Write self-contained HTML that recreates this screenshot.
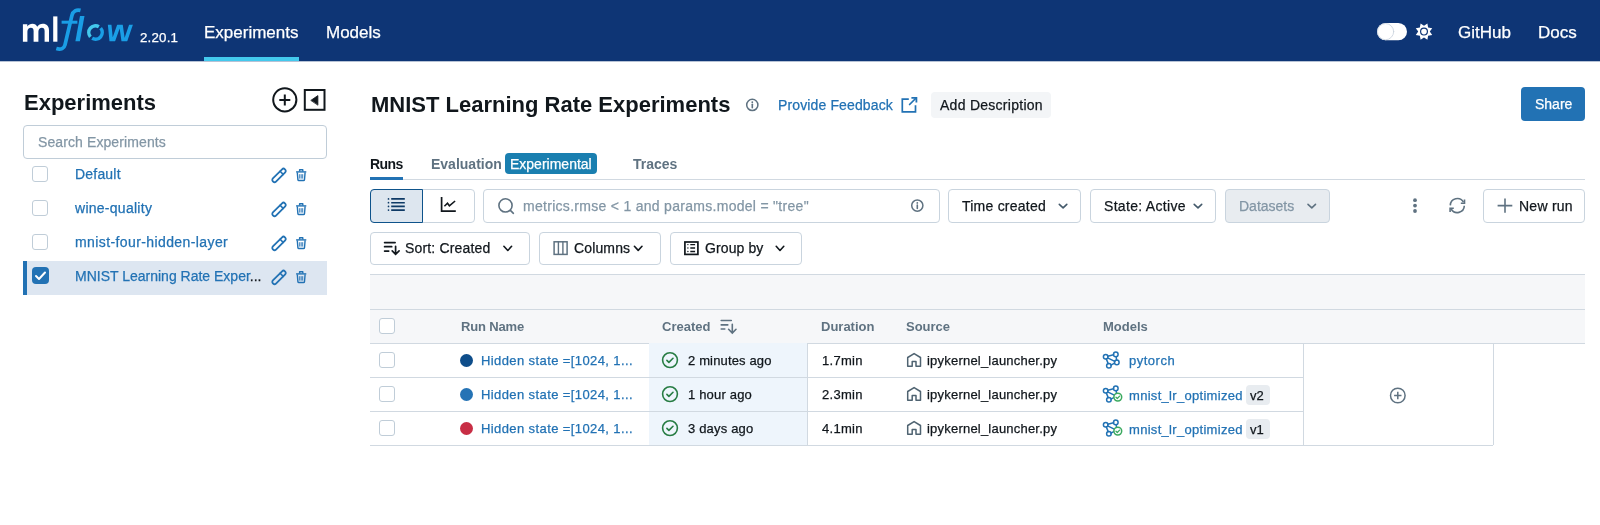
<!DOCTYPE html>
<html><head><meta charset="utf-8">
<style>
*{box-sizing:border-box;margin:0;padding:0}
html,body{width:1600px;height:525px;overflow:hidden;background:#fff;font-family:"Liberation Sans",sans-serif;color:#11171c}
.a{position:absolute}
.t{position:absolute;white-space:nowrap;line-height:1;will-change:transform;-webkit-text-stroke:0.25px currentColor}
#hdr{position:absolute;left:0;top:0;width:1600px;height:61px;background:#0e3575}
.nav{color:#fff;font-size:17px}
.blue{color:#2272b4}
.sec{color:#5f7281}
.btn{position:absolute;border:1px solid #c9d4de;border-radius:4px;background:#fff}
.cb{position:absolute;width:16px;height:16px;border:1px solid #c0cdd8;border-radius:3px;background:#fff}
.hl{position:absolute;height:1px;background:#d1d9e1}
.vl{position:absolute;width:1px;background:#d1d9e1}
svg{position:absolute;overflow:visible}
.t[style*="font-weight:700"]{-webkit-text-stroke:0}
</style></head><body>
<div class="a" style="left:0;top:61px;width:1600px;height:1px;background:rgba(14,53,117,0.3)"></div>
<div id="hdr">
  <div class="t nav" style="left:204px;top:24px">Experiments</div>
  <div class="t nav" style="left:325.5px;top:24px">Models</div>
  <div class="a" style="left:204px;top:57px;width:95px;height:4px;background:#43c9ed"></div>
  <div class="t nav" style="left:1458px;top:24px">GitHub</div>
  <div class="t nav" style="left:1537.5px;top:24px">Docs</div>
  <div class="t" style="left:139.5px;top:30.8px;font-size:13.3px;color:#fff;letter-spacing:0.2px">2.20.1</div>
</div>

<!-- sidebar -->
<div class="t" style="left:24px;top:92.2px;font-size:22px;font-weight:700">Experiments</div>
<div class="a" style="left:23px;top:125px;width:304px;height:34px;border:1px solid #c0cdd8;border-radius:4px"></div>
<div class="t" style="left:37.5px;top:135.3px;font-size:14px;color:#8396a5;letter-spacing:0.1px">Search Experiments</div>

<div class="cb" style="left:32px;top:166px"></div>
<div class="t blue" style="left:74.5px;top:166.8px;font-size:14px;letter-spacing:0.2px">Default</div>
<div class="cb" style="left:32px;top:200px"></div>
<div class="t blue" style="left:74.5px;top:200.8px;font-size:14px;letter-spacing:0.27px">wine-quality</div>
<div class="cb" style="left:32px;top:234px"></div>
<div class="t blue" style="left:74.5px;top:234.8px;font-size:14px;letter-spacing:0.4px">mnist-four-hidden-layer</div>
<div class="a" style="left:27px;top:261px;width:300px;height:34px;background:#dde6f1"></div>
<div class="a" style="left:23.3px;top:261px;width:4.2px;height:34px;background:#2272b4"></div>
<div class="a" style="left:32px;top:267px;width:16.7px;height:16.7px;border-radius:4px;background:#2272b4"></div>
<div class="t blue" style="left:74.5px;top:268.8px;font-size:14px">MNIST Learning Rate Exper<span style="color:#11171c">...</span></div>

<!-- main title -->
<div class="t" style="left:371px;top:94.1px;font-size:22px;font-weight:700">MNIST Learning Rate Experiments</div>
<div class="t blue" style="left:778px;top:98.2px;font-size:14px;letter-spacing:0.13px">Provide Feedback</div>
<div class="a" style="left:931px;top:92px;width:120px;height:25.5px;border-radius:4px;background:#f3f5f7"></div>
<div class="t" style="left:940px;top:98.2px;font-size:14px;letter-spacing:0.27px">Add Description</div>
<div class="a" style="left:1520.5px;top:87px;width:64.5px;height:34px;border-radius:4px;background:#2272b4"></div>
<div class="t" style="left:1534.5px;top:97.2px;font-size:14px;color:#fff">Share</div>

<!-- tabs -->
<div class="t" style="left:370px;top:157px;font-size:14px;font-weight:700;letter-spacing:-0.6px">Runs</div>
<div class="t sec" style="left:431px;top:157px;font-size:14px;font-weight:700">Evaluation</div>
<div class="a" style="left:504.5px;top:153px;width:92px;height:20.5px;border-radius:4px;background:#1a7fb0"></div>
<div class="t" style="left:509.5px;top:157px;font-size:14px;color:#fff">Experimental</div>
<div class="t sec" style="left:633px;top:157px;font-size:14px;font-weight:700">Traces</div>
<div class="hl" style="left:370px;top:179px;width:1215px"></div>
<div class="a" style="left:370px;top:177px;width:33px;height:3px;background:#2272b4"></div>

<!-- toolbar row 1 -->
<div class="btn" style="left:370px;top:189px;width:105px;height:34px"></div>
<div class="a" style="left:370px;top:189px;width:53px;height:34px;border:1px solid #0e538b;border-radius:4px 0 0 4px;background:#dde6ef"></div>
<div class="btn" style="left:483px;top:189px;width:456.5px;height:34px"></div>
<div class="t" style="left:522.5px;top:199.2px;font-size:14px;color:#8396a5;letter-spacing:0.29px">metrics.rmse &lt; 1 and params.model = "tree"</div>
<div class="btn" style="left:948px;top:189px;width:133px;height:34px"></div>
<div class="t" style="left:962px;top:199.2px;font-size:14px;letter-spacing:0.23px">Time created</div>
<div class="btn" style="left:1090px;top:189px;width:126px;height:34px"></div>
<div class="t" style="left:1103.5px;top:199.2px;font-size:14px;letter-spacing:0.31px">State: Active</div>
<div class="btn" style="left:1224.5px;top:189px;width:105px;height:34px;background:#e8ecf0"></div>
<div class="t" style="left:1238.5px;top:199.2px;font-size:14px;color:#8396a5">Datasets</div>
<div class="btn" style="left:1483px;top:189px;width:101.5px;height:34px"></div>
<div class="t" style="left:1518.5px;top:199.2px;font-size:14px;letter-spacing:0.25px">New run</div>

<!-- toolbar row 2 -->
<div class="btn" style="left:370px;top:231.5px;width:159.5px;height:33px"></div>
<div class="t" style="left:405px;top:241.4px;font-size:14px;letter-spacing:0.17px">Sort: Created</div>
<div class="btn" style="left:538.5px;top:231.5px;width:122px;height:33px"></div>
<div class="t" style="left:573.5px;top:241.4px;font-size:14px;letter-spacing:0.14px">Columns</div>
<div class="btn" style="left:669.5px;top:231.5px;width:132px;height:33px"></div>
<div class="t" style="left:704.5px;top:241.4px;font-size:14px;letter-spacing:0.1px">Group by</div>

<!-- table -->
<div class="a" style="left:370px;top:274px;width:1215px;height:69px;background:#f6f7f9"></div>
<div class="hl" style="left:370px;top:273.5px;width:1215px"></div>
<div class="hl" style="left:370px;top:309px;width:1215px"></div>
<div class="hl" style="left:370px;top:342.5px;width:1215px"></div>
<div class="cb" style="left:378.5px;top:318px"></div>
<div class="t sec" style="left:460.5px;top:319.8px;font-size:13px;font-weight:700;letter-spacing:-0.15px">Run Name</div>
<div class="t sec" style="left:662px;top:319.8px;font-size:13px;font-weight:700">Created</div>
<div class="t sec" style="left:821px;top:319.8px;font-size:13px;font-weight:700">Duration</div>
<div class="t sec" style="left:906px;top:319.8px;font-size:13px;font-weight:700">Source</div>
<div class="t sec" style="left:1103px;top:319.8px;font-size:13px;font-weight:700">Models</div>

<div class="a" style="left:649px;top:343px;width:158px;height:102px;background:#eef5fc"></div>
<div class="vl" style="left:807px;top:343px;height:102px"></div>
<div class="hl" style="left:370px;top:377px;width:933px"></div>
<div class="hl" style="left:370px;top:411px;width:933px"></div>
<div class="hl" style="left:370px;top:444.5px;width:1123px"></div>
<div class="vl" style="left:1302.5px;top:343px;height:102px"></div>
<div class="vl" style="left:1492.5px;top:343px;height:102px"></div>

<div class="cb" style="left:378.5px;top:352px"></div>
<div class="cb" style="left:378.5px;top:386px"></div>
<div class="cb" style="left:378.5px;top:420px"></div>
<div class="a" style="left:459.8px;top:353.5px;width:13px;height:13px;border-radius:50%;background:#0e4d8a"></div>
<div class="a" style="left:459.8px;top:387.5px;width:13px;height:13px;border-radius:50%;background:#2573b5"></div>
<div class="a" style="left:459.8px;top:421.5px;width:13px;height:13px;border-radius:50%;background:#c82e45"></div>
<div class="t blue" style="left:481px;top:354px;font-size:13px;letter-spacing:0.4px">Hidden state =[1024, 1...</div>
<div class="t blue" style="left:481px;top:388px;font-size:13px;letter-spacing:0.4px">Hidden state =[1024, 1...</div>
<div class="t blue" style="left:481px;top:422px;font-size:13px;letter-spacing:0.4px">Hidden state =[1024, 1...</div>
<div class="t" style="left:688px;top:354px;font-size:13px;letter-spacing:0.15px">2 minutes ago</div>
<div class="t" style="left:688px;top:388px;font-size:13px;letter-spacing:0.18px">1 hour ago</div>
<div class="t" style="left:688px;top:422px;font-size:13px;letter-spacing:0.18px">3 days ago</div>
<div class="t" style="left:821.5px;top:354px;font-size:13px;letter-spacing:0.3px">1.7min</div>
<div class="t" style="left:821.5px;top:388px;font-size:13px;letter-spacing:0.3px">2.3min</div>
<div class="t" style="left:821.5px;top:422px;font-size:13px;letter-spacing:0.3px">4.1min</div>
<div class="t" style="left:927px;top:354px;font-size:13px;letter-spacing:0.21px">ipykernel_launcher.py</div>
<div class="t" style="left:927px;top:388px;font-size:13px;letter-spacing:0.21px">ipykernel_launcher.py</div>
<div class="t" style="left:927px;top:422px;font-size:13px;letter-spacing:0.21px">ipykernel_launcher.py</div>
<div class="t blue" style="left:1128.5px;top:354px;font-size:13px;letter-spacing:0.5px">pytorch</div>
<div class="t blue" style="left:1128.5px;top:389px;font-size:13px;letter-spacing:0.3px">mnist_lr_optimized</div>
<div class="t blue" style="left:1128.5px;top:423px;font-size:13px;letter-spacing:0.3px">mnist_lr_optimized</div>
<div class="a" style="left:1246px;top:384.5px;width:24px;height:20px;border-radius:4px;background:#e8ecf0"></div>
<div class="t" style="left:1250px;top:389px;font-size:13px">v2</div>
<div class="a" style="left:1246px;top:418.5px;width:24px;height:20px;border-radius:4px;background:#e8ecf0"></div>
<div class="t" style="left:1250px;top:423px;font-size:13px">v1</div>


<svg width="1600" height="525" style="left:0;top:0" viewBox="0 0 1600 525" fill="none" stroke-linecap="round" stroke-linejoin="round">
<defs><clipPath id="wclip"><rect x="100" y="24.7" width="40" height="16.5"/></clipPath></defs>
<!-- logo -->
<g fill="#fff" stroke="none">
 <path d="M22.9 41.7V24.2H27.3V26.6C28.5 24.8 30.3 23.8 32.5 23.8C34.8 23.8 36.4 24.9 37.2 26.8C38.5 24.9 40.4 23.8 42.8 23.8C46.7 23.8 49 26.2 49 30.3V41.7H44.6V31C44.6 28.9 43.7 27.8 41.9 27.8C40 27.8 38.4 29.3 38.4 31.8V41.7H33.6V31C33.6 28.9 32.7 27.8 30.9 27.8C29 27.8 27.4 29.3 27.4 31.8V41.7Z"/>
 <rect x="53.2" y="16.4" width="4.2" height="25.3"/>
</g>
<g stroke="#1a9ee6" fill="none" stroke-linecap="butt">
 <path d="M80.5 10.4C76.5 9.4 73 10.8 71.9 15.5L65 44.8C64.2 48.3 61 50.1 56.3 48.6" stroke-width="3.7"/>
 <path d="M61.6 22.2H77.4" stroke-width="3"/>
</g>
<path d="M80 16H84.5L79.9 41.2H75.4Z" fill="#1a9ee6"/>
<path d="M90.37 36.81A6.7 6.7 0 0 1 98.85 26.70" stroke="#43c9ed" stroke-width="3.5" stroke-linecap="butt"/>
<path d="M100.63 28.19A6.7 6.7 0 0 1 92.15 38.30" stroke="#1a9ee6" stroke-width="3.5" stroke-linecap="butt"/>
<g clip-path="url(#wclip)"><path d="M109.2 20L111.7 45.5L120.4 21L123.9 45.5L132.6 20" stroke="#1a9ee6" stroke-width="3.6" stroke-linecap="butt" stroke-linejoin="miter" stroke-miterlimit="10"/></g>
<!-- toggle & sun -->
<rect x="1377" y="23" width="30" height="17.3" rx="8.65" fill="#fff"/>
<circle cx="1385.6" cy="31.65" r="8.1" fill="#fff" stroke="#c6d1dc" stroke-width="0.8"/>
<g transform="translate(1424 31.6)">
 <path d="M0.00 -5.80L3.41 -8.22L4.10 -4.10L8.22 -3.41L5.80 0.00L8.22 3.41L4.10 4.10L3.41 8.22L0.00 5.80L-3.41 8.22L-4.10 4.10L-8.22 3.41L-5.80 0.00L-8.22 -3.41L-4.10 -4.10L-3.41 -8.22Z" fill="#fff"/>
 <circle r="3.4" fill="none" stroke="#0e3575" stroke-width="1.2"/>
</g>
<!-- sidebar icons -->
<circle cx="284.8" cy="99.8" r="11.6" stroke="#11171c" stroke-width="2"/>
<path d="M279.3 100H290.3M284.8 94.5V105.5" stroke="#11171c" stroke-width="2" stroke-linecap="butt"/>
<rect x="304.8" y="90" width="19.7" height="19.8" stroke="#11171c" stroke-width="2" stroke-linejoin="miter"/>
<path d="M311.1 100.2L317.9 95.6V104.8Z" fill="#11171c" stroke="#11171c" stroke-width="0.8"/>
<g id="pen">
 <g transform="translate(279.1 175.35) rotate(-45)">
  <rect x="-8.6" y="-2.2" width="17" height="4.4" rx="2" stroke="#2272b4" stroke-width="1.8"/>
  <path d="M3.6-2.2V2.2" stroke="#2272b4" stroke-width="1.6"/>
 </g>
</g>
<g id="trash" stroke="#2272b4" stroke-width="1.4" stroke-linecap="butt" stroke-linejoin="round">
 <path d="M296.1 171.9H306.3"/>
 <path d="M299.6 171.6V169.8H302.8V171.6"/>
 <path d="M297.3 172.4L297.9 179.6Q298 180.5 298.9 180.5H303.5Q304.4 180.5 304.5 179.6L305.1 172.4"/>
 <path d="M299.7 174.2V178.6M301.2 174.2V178.6M302.7 174.2V178.6" stroke-width="0.9"/>
</g>
<use href="#pen" y="34"/><use href="#trash" y="34"/>
<use href="#pen" y="68"/><use href="#trash" y="68"/>
<use href="#pen" y="102"/><use href="#trash" y="102"/>
<path d="M36 276L39 279L45 272.5" stroke="#fff" stroke-width="2"/>
<!-- title icons -->
<circle cx="752.3" cy="104.9" r="5.6" stroke="#5f7281" stroke-width="1.5"/>
<path d="M752.3 104.3V107.7" stroke="#5f7281" stroke-width="1.6"/>
<circle cx="752.3" cy="102.2" r="0.9" fill="#5f7281" stroke="none"/>
<path d="M908.8 99.1H902.3V111.8H915.5V105.3" stroke="#2272b4" stroke-width="1.7" stroke-linecap="butt" stroke-linejoin="miter"/>
<path d="M909.6 104.5L915.6 98.5" stroke="#2272b4" stroke-width="1.7"/>
<path d="M911.4 97.8H916.4V102.4" stroke="#2272b4" stroke-width="1.8" stroke-linecap="butt" stroke-linejoin="miter"/>
<!-- toolbar icons -->
<g stroke="#0e3a66" stroke-width="1.6" stroke-linecap="butt">
 <path d="M391.2 198.9H404.8M391.2 202.7H404.8M391.2 206.4H404.8M391.2 210.1H404.8"/>
</g>
<g fill="#0e3a66"><circle cx="388.5" cy="198.9" r="0.85"/><circle cx="388.5" cy="202.7" r="0.85"/><circle cx="388.5" cy="206.4" r="0.85"/><circle cx="388.5" cy="210.1" r="0.85"/></g>
<path d="M441.6 197.1V211.1H455.8" stroke="#11171c" stroke-width="1.7" stroke-linecap="butt" stroke-linejoin="miter"/>
<path d="M444.4 206.3L447.5 203.3L449.4 205.8L455.1 201" stroke="#11171c" stroke-width="1.6" stroke-linecap="butt" stroke-linejoin="miter"/>
<circle cx="505.5" cy="205.4" r="6.6" stroke="#5f7281" stroke-width="1.6"/>
<path d="M510.4 210.4L513.4 213.3" stroke="#5f7281" stroke-width="1.6"/>
<circle cx="917.3" cy="205.6" r="5.6" stroke="#5f7281" stroke-width="1.5"/>
<path d="M917.3 205V208.4" stroke="#5f7281" stroke-width="1.6"/>
<circle cx="917.3" cy="202.9" r="0.9" fill="#5f7281" stroke="none"/>
<g stroke="#445a6b" stroke-width="1.6">
 <path d="M1059.3 204.3L1063.1 207.8L1066.8 204.3"/>
 <path d="M1194.2 204.3L1198 207.8L1201.7 204.3"/>
 <path d="M1504.7 240"/>
</g>
<path d="M1308 204.3L1311.8 207.8L1315.5 204.3" stroke="#5f7281" stroke-width="1.6"/>
<g fill="#5f7281"><circle cx="1415" cy="200.2" r="1.9"/><circle cx="1415" cy="205.6" r="1.9"/><circle cx="1415" cy="211" r="1.9"/></g>
<g stroke="#5f7281" stroke-width="1.6" stroke-linecap="butt" stroke-linejoin="miter">
 <path d="M1450.3 205.4A7 7 0 0 1 1463.4 202.2"/>
 <path d="M1464.3 205.8A7 7 0 0 1 1451.2 209"/>
 <path d="M1460.8 203.2H1464.5V199.5"/>
 <path d="M1453.8 208.3H1450.1V212"/>
 <path d="M1497.6 205.6H1512.3M1505 198.4V212.8"/>
</g>
<!-- row 2 icons -->
<g stroke="#11171c" stroke-width="1.7" stroke-linecap="round">
 <path d="M384.6 242.6H395.1M384.6 246.7H391.7M384.6 251.1H388.7"/>
 <path d="M395.6 246.3V254.2M392.2 250.9L395.6 254.3L399.1 250.9" stroke-linejoin="miter"/>
</g>
<path d="M503.9 246.3L507.8 250.5L511.6 246.3" stroke="#11171c" stroke-width="1.6"/>
<rect x="554.1" y="241.8" width="13" height="12.6" stroke="#5f7281" stroke-width="1.5" stroke-linejoin="miter"/>
<path d="M558.4 241.8V254.4M562.9 241.8V254.4" stroke="#5f7281" stroke-width="1.4"/>
<path d="M634.4 246.3L638.2 250.4L642 246.3" stroke="#11171c" stroke-width="1.6"/>
<rect x="684.9" y="242" width="13" height="12.4" stroke="#11171c" stroke-width="1.7" stroke-linejoin="miter"/>
<path d="M690.3 244.6H695.1M690.3 248H695.1M690.3 251.5H695.1" stroke="#11171c" stroke-width="1.4" stroke-linecap="butt"/>
<g fill="#11171c"><circle cx="687.9" cy="244.6" r="0.7"/><circle cx="687.9" cy="248" r="0.7"/><circle cx="687.9" cy="251.5" r="0.7"/></g>
<path d="M776.2 246.3L780 250.5L783.8 246.3" stroke="#11171c" stroke-width="1.6"/>
<!-- table header icon -->
<g stroke="#5f7281" stroke-width="1.6" stroke-linecap="round">
 <path d="M721.2 320.5H731.3M721.2 324.9H727.8M721.2 329H724.8"/>
 <path d="M732.3 324.3V332.7M728.6 329.3L732.3 333L736 329.3" stroke-linejoin="miter"/>
</g>
<!-- row icons -->
<g id="chk">
 <circle cx="670" cy="360.1" r="7.4" stroke="#277c43" stroke-width="1.6"/>
 <path d="M666.9 360.4L668.9 362.4L673 358.3" stroke="#277c43" stroke-width="1.6"/>
</g>
<use href="#chk" y="34"/><use href="#chk" y="68"/>
<g id="home">
 <path d="M907.7 366.3V357.5L914.1 353.6L920.5 357.5V366.3H916V361.5H912.2V366.3Z" stroke="#4f6371" stroke-width="1.5" stroke-linejoin="round"/>
</g>
<use href="#home" y="34"/><use href="#home" y="68"/>
<g id="model" stroke="#2272b4" stroke-width="1.5">
 <path d="M1107.8 356.2L1113.6 354.8M1107.6 357.8L1114.8 361.4M1106.3 358.9L1108.2 363.6M1111 365.1L1114.6 363.2M1116.2 356.6L1116.6 360.1"/>
 <circle cx="1105.7" cy="356.7" r="2.3"/>
 <circle cx="1115.8" cy="354.4" r="2.3"/>
 <circle cx="1108.9" cy="365.8" r="2.3"/>
</g>
<circle cx="1116.8" cy="362.4" r="2.3" stroke="#2272b4" stroke-width="1.5"/>
<use href="#model" y="34"/><use href="#model" y="68"/>
<g id="mchk">
 <circle cx="1117.8" cy="397.1" r="3.9" fill="#fff" stroke="#3caa60" stroke-width="1.5"/>
 <path d="M1116 397.3L1117.3 398.5L1119.6 396.1" stroke="#3caa60" stroke-width="1.3"/>
</g>
<use href="#mchk" y="34"/>
<circle cx="1397.8" cy="395.5" r="7.3" stroke="#5f7281" stroke-width="1.5"/>
<path d="M1394.1 395.5H1401.5M1397.8 391.8V399.2" stroke="#5f7281" stroke-width="1.5" stroke-linecap="butt"/>
</svg>
</body></html>
